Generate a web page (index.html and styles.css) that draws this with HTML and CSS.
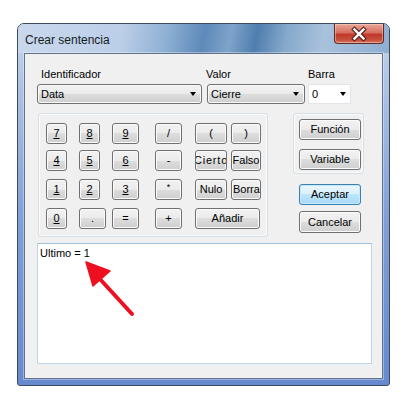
FILE: index.html
```html
<!DOCTYPE html>
<html>
<head>
<meta charset="utf-8">
<link rel="stylesheet" href="styles.css">
</head>
<body>
<div class="stage">
  <div class="window">
    <div class="titlebar">
      <div class="title">Crear sentencia</div>
      <div class="close">
        <svg width="48" height="18" viewBox="0 0 48 18">
          <path d="M19.5 4.5 L28.5 13.5 M28.5 4.5 L19.5 13.5" stroke="#5a2420" stroke-width="4.6" stroke-linecap="square"/>
          <path d="M19.5 4.5 L28.5 13.5 M28.5 4.5 L19.5 13.5" stroke="#ffffff" stroke-width="2.4" stroke-linecap="square"/>
        </svg>
      </div>
    </div>
    <div class="client">
      <div class="fields">
        <div class="label label-id">Identificador</div>
        <div class="label label-valor">Valor</div>
        <div class="label">Barra</div>
        <div class="combo ddl w-id"><span>Data</span><i class="caret"></i></div>
        <div class="combo ddl w-valor"><span>Cierre</span><i class="caret"></i></div>
        <div class="combo edit w-barra"><span>0</span><i class="caret"></i></div>
      </div>
      <div class="main">
        <div class="keypad">
          <button class="btn w21"><span><u>7</u></span></button>
          <button class="btn w21"><span><u>8</u></span></button>
          <button class="btn w27"><span><u>9</u></span></button>
          <button class="btn w27"><span>/</span></button>
          <button class="btn w31"><span>(</span></button>
          <button class="btn w30"><span>)</span></button>

          <button class="btn w21"><span><u>4</u></span></button>
          <button class="btn w21"><span><u>5</u></span></button>
          <button class="btn w27"><span><u>6</u></span></button>
          <button class="btn w27"><span>-</span></button>
          <button class="btn w31"><span class="wide">Cierto</span></button>
          <button class="btn w30"><span>Falso</span></button>

          <button class="btn w21"><span><u>1</u></span></button>
          <button class="btn w21"><span><u>2</u></span></button>
          <button class="btn w27"><span><u>3</u></span></button>
          <button class="btn w27"><span class="star">*</span></button>
          <button class="btn w31"><span>Nulo</span></button>
          <button class="btn w30 clip-right"><span>Borrar</span></button>

          <button class="btn w21"><span><u>0</u></span></button>
          <button class="btn w27"><span>.</span></button>
          <button class="btn w27"><span>=</span></button>
          <button class="btn w27"><span>+</span></button>
          <button class="btn w65 span2"><span>Añadir</span></button>
        </div>
        <div class="side">
          <div class="side-group">
            <button class="btn w62"><span>Función</span></button>
            <button class="btn w62 gap9"><span>Variable</span></button>
          </div>
          <button class="btn w62 default aceptar"><span>Aceptar</span></button>
          <button class="btn w62 cancelar"><span>Cancelar</span></button>
        </div>
      </div>
      <div class="output">
        <div class="output-text">Ultimo = 1</div>
        <svg class="pointer" width="110" height="80" viewBox="0 0 110 80">
          <path d="M61 34 L94 70" stroke="#ee1020" stroke-width="4" stroke-linecap="round"/>
          <path d="M48 18 L72 27 L55 42 Z" fill="#ee1020" stroke="#ee1020" stroke-width="1.5" stroke-linejoin="round"/>
        </svg>
      </div>
    </div>
  </div>
</div>
</body>
</html>
```

FILE: styles.css
```css
body {
  margin: 0;
  background: #ffffff;
  font-family: "Liberation Sans", Arial, sans-serif;
  font-size: 11px;
  color: #000;
}

.stage {
  padding: 23px 0 0 17px;
}

.window {
  width: 373px;
  height: 363px;
  box-sizing: border-box;
  border: 1px solid #3d4a5d;
  border-radius: 7px 7px 3px 3px;
  background: linear-gradient(to bottom, #c6d6ec 0%, #a9c0e3 20%, #7f9fd8 55%, #6689cf 100%);
  display: flex;
  flex-direction: column;
}

.titlebar {
  height: 29px;
  display: flex;
  justify-content: space-between;
  align-items: flex-start;
  border-radius: 6px 6px 0 0;
  background: linear-gradient(100deg, #c9d8ec 0%, #bccfe8 28%, #8fb0d4 40%, #5d89b9 50%, #7ea4ca 57%, #4f7eae 64%, #86a9cc 72%, #a9c2dc 82%, #8eaed2 100%);
}

.title {
  font-size: 12px;
  line-height: 15px;
  padding: 9px 0 0 7px;
  color: #151c26;
}

.close {
  width: 50px;
  height: 20px;
  box-sizing: border-box;
  margin-right: 5px;
  border: 1px solid #5b2b26;
  border-top: none;
  border-radius: 0 0 4px 4px;
  background: linear-gradient(to bottom, #e9a898 0%, #d7705f 45%, #c0392b 55%, #c9503e 85%, #d97b62 100%);
  box-shadow: inset 0 0 0 1px rgba(255, 220, 210, 0.45);
  display: flex;
  align-items: center;
  justify-content: center;
}

.client {
  margin: 0 6px 6px;
  flex: 1;
  border: 1px solid #62728a;
  background: #f0f0f0;
  padding: 14px 0 0 12px;
  box-shadow: 0 0 0 1px rgba(255, 255, 255, 0.35);
}

/* top fields */
.fields {
  display: grid;
  grid-template-columns: 170px 101px 43px;
  row-gap: 3px;
}

.label {
  line-height: 13px;
  color: #000;
}

.label-id {
  padding-left: 4px;
}

.label-valor {
  margin-left: -1px;
}

.combo {
  height: 20px;
  box-sizing: border-box;
  display: flex;
  align-items: center;
  justify-content: space-between;
  padding: 0 5px 0 3px;
  line-height: 13px;
}

.combo.ddl {
  border: 1px solid #707070;
  border-radius: 3px;
  background: linear-gradient(to bottom, #f2f2f2 0%, #ebebeb 50%, #dddddd 50%, #cfcfcf 100%);
  box-shadow: inset 0 0 0 1px #fafafa;
}

.combo.edit {
  border: 1px solid #e2e5ea;
  background: #ffffff;
  padding-right: 4px;
}

.w-id { width: 165px; }
.w-valor { width: 98px; }
.w-barra { width: 43px; }

.caret {
  width: 0;
  height: 0;
  border-left: 3.5px solid transparent;
  border-right: 3.5px solid transparent;
  border-top: 4px solid #000;
}

/* main area */
.main {
  display: flex;
  margin-top: 9px;
}

.keypad {
  margin-left: 1px;
  width: 230px;
  height: 124px;
  box-sizing: border-box;
  border: 1px solid #d5dfe5;
  border-radius: 3px;
  box-shadow: inset 0 0 0 1px #fbfbfb;
  padding: 9px 0 0 7px;
  display: grid;
  grid-template-columns: 33px 33px 43px 40px 36px 30px;
  grid-template-rows: 27px 29px 29px 21px;
  align-items: start;
  justify-items: start;
}

.span2 {
  grid-column: span 2;
}

.btn {
  box-sizing: border-box;
  height: 21px;
  padding: 0;
  margin: 0;
  border: 1px solid #707070;
  border-radius: 3px;
  background: linear-gradient(to bottom, #f2f2f2 0%, #ebebeb 50%, #dddddd 50%, #cfcfcf 100%);
  box-shadow: inset 0 0 0 1px #fbfbfb;
  display: flex;
  align-items: center;
  justify-content: center;
  overflow: hidden;
  font-family: "Liberation Sans", Arial, sans-serif;
  font-size: 11px;
  line-height: 13px;
  color: #000;
  white-space: nowrap;
}

.btn span {
  flex: none;
}

.btn .wide {
  letter-spacing: 0.8px;
}

.btn.clip-right {
  justify-content: flex-start;
  padding-left: 1px;
}

.btn .star {
  font-size: 9px;
  position: relative;
  top: -2px;
}

.w21 { width: 21px; }
.w27 { width: 27px; }
.w30 { width: 30px; }
.w31 { width: 32px; }
.w62 { width: 62px; }
.w65 { width: 65px; }

.side {
  margin-left: 25px;
  display: flex;
  flex-direction: column;
}

.side-group {
  width: 71px;
  height: 61px;
  box-sizing: border-box;
  border: 1px solid #d5dfe5;
  border-radius: 3px;
  box-shadow: inset 0 0 0 1px #fbfbfb;
  padding: 5px 0 0 5px;
}

.gap9 {
  margin-top: 9px;
}

.aceptar {
  margin: 10px 0 0 6px;
}

.cancelar {
  margin: 6px 0 0 6px;
  height: 22px;
}

.btn.default {
  border-color: #3c7fb1;
  background: linear-gradient(to bottom, #eaf6fd 0%, #d9f0fc 50%, #bee6fd 50%, #a7d9f5 100%);
  box-shadow: inset 0 0 0 1px #c4e9fd;
}

/* output box */
.output {
  position: relative;
  margin-top: 6px;
  width: 335px;
  height: 121px;
  box-sizing: border-box;
  border: 1px solid #bcd6ea;
  border-top-color: #9fbfdc;
  background: #ffffff;
  padding: 3px 2px;
}

.output-text {
  line-height: 13px;
}

.pointer {
  position: absolute;
  left: 0;
  top: 0;
}
```
